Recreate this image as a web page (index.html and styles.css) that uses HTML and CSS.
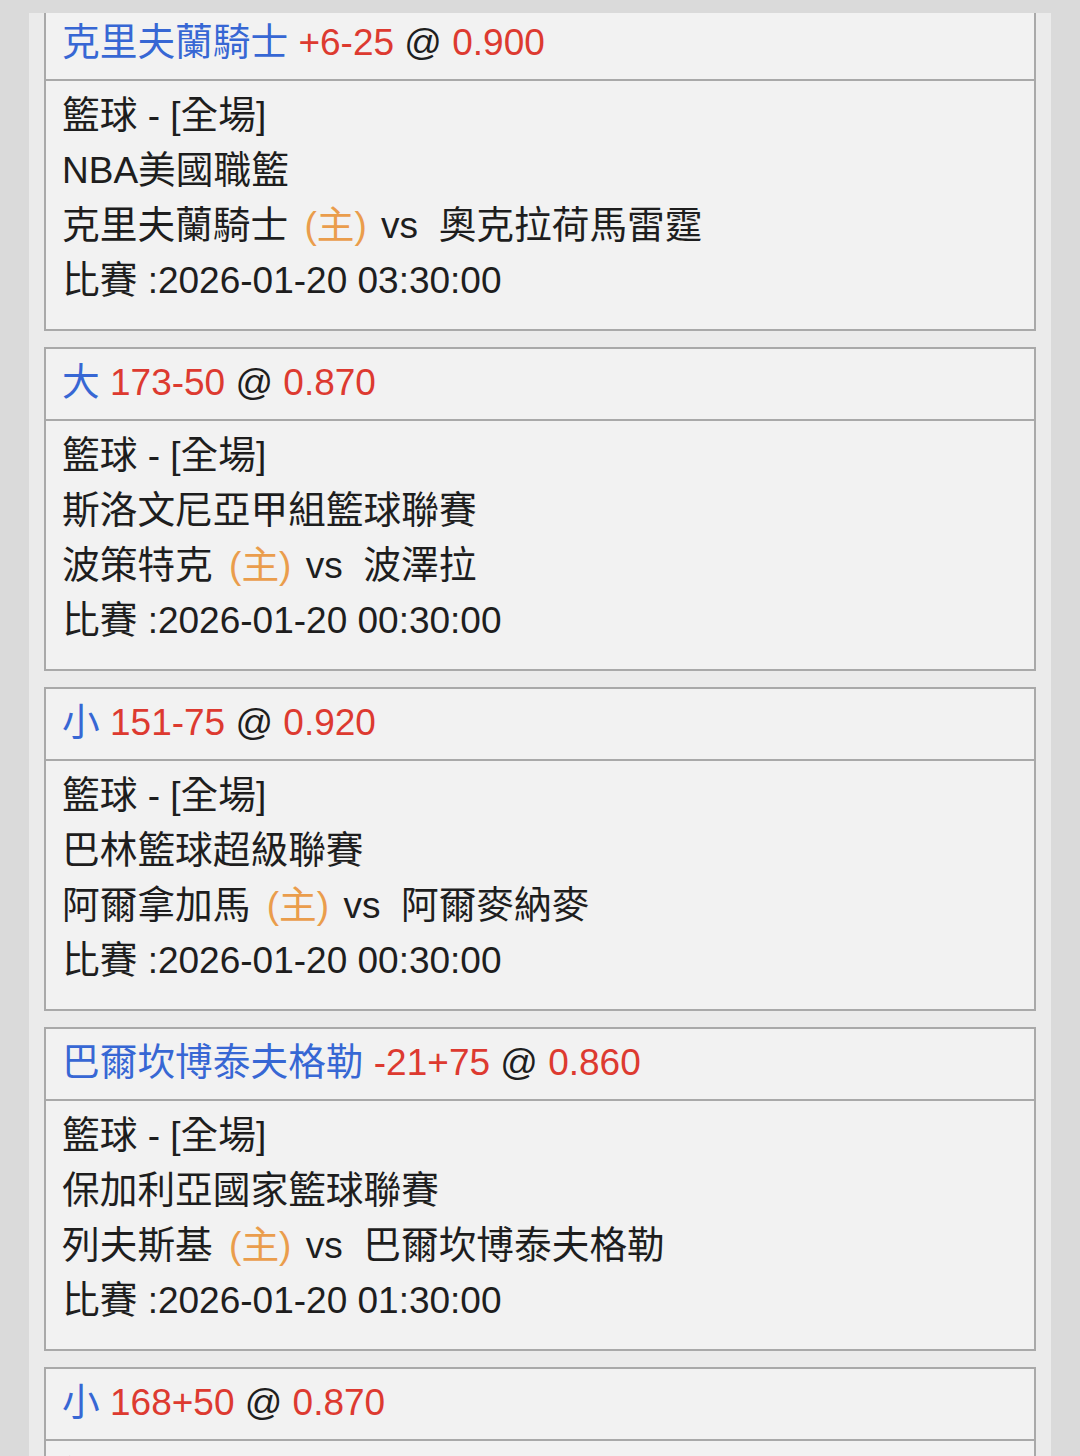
FILE: index.html
```html
<!DOCTYPE html>
<html lang="zh-Hant">
<head>
<meta charset="utf-8">
<link rel="stylesheet" href="styles.css">
</head>
<body>
<div class="page">
  <div class="list">
    <div class="card first">
      <div class="head"><span class="blue c">克里夫蘭騎士</span> <span class="red">+6-25</span> @ <span class="red">0.900</span></div>
      <div class="body">
        <div><span class="c">籃球</span> - [<span class="c">全場</span>]</div>
        <div>NBA<span class="c">美國職籃</span></div>
        <div><span class="c">克里夫蘭騎士</span> <span class="orange">(<span class="c">主</span>)</span> <span class="vs">vs</span> &nbsp;<span class="c">奧克拉荷馬雷霆</span></div>
        <div><span class="c">比賽</span> :2026-01-20 03:30:00</div>
      </div>
    </div>
    <div class="card">
      <div class="head"><span class="blue c">大</span> <span class="red">173-50</span> @ <span class="red">0.870</span></div>
      <div class="body">
        <div><span class="c">籃球</span> - [<span class="c">全場</span>]</div>
        <div><span class="c">斯洛文尼亞甲組籃球聯賽</span></div>
        <div><span class="c">波策特克</span> <span class="orange">(<span class="c">主</span>)</span> <span class="vs">vs</span> &nbsp;<span class="c">波澤拉</span></div>
        <div><span class="c">比賽</span> :2026-01-20 00:30:00</div>
      </div>
    </div>
    <div class="card">
      <div class="head"><span class="blue c">小</span> <span class="red">151-75</span> @ <span class="red">0.920</span></div>
      <div class="body">
        <div><span class="c">籃球</span> - [<span class="c">全場</span>]</div>
        <div><span class="c">巴林籃球超級聯賽</span></div>
        <div><span class="c">阿爾拿加馬</span> <span class="orange">(<span class="c">主</span>)</span> <span class="vs">vs</span> &nbsp;<span class="c">阿爾麥納麥</span></div>
        <div><span class="c">比賽</span> :2026-01-20 00:30:00</div>
      </div>
    </div>
    <div class="card">
      <div class="head"><span class="blue c">巴爾坎博泰夫格勒</span> <span class="red">-21+75</span> @ <span class="red">0.860</span></div>
      <div class="body">
        <div><span class="c">籃球</span> - [<span class="c">全場</span>]</div>
        <div><span class="c">保加利亞國家籃球聯賽</span></div>
        <div><span class="c">列夫斯基</span> <span class="orange">(<span class="c">主</span>)</span> <span class="vs">vs</span> &nbsp;<span class="c">巴爾坎博泰夫格勒</span></div>
        <div><span class="c">比賽</span> :2026-01-20 01:30:00</div>
      </div>
    </div>
    <div class="card">
      <div class="head"><span class="blue c">小</span> <span class="red">168+50</span> @ <span class="red">0.870</span></div>
      <div class="body">
        <div><span class="c">籃球</span> - [<span class="c">全場</span>]</div>
        <div>&nbsp;</div>
        <div>&nbsp;</div>
        <div>&nbsp;</div>
      </div>
    </div>
  </div>
</div>
</body>
</html>
```

FILE: styles.css
```css
html, body {
  margin: 0;
  padding: 0;
  background: #dadada;
}
.page {
  height: 1456px;
  overflow: hidden;
  padding: 13px 29px 0 29px;
  box-sizing: border-box;
}
.list {
  background: #ebebeb;
  height: 1443px;
  overflow: hidden;
  padding: 0 15px;
  display: flex;
  flex-direction: column;
  gap: 16px;
  font-family: "Liberation Sans", "Noto Sans CJK TC", sans-serif;
  font-size: 37px;
  color: #1e1e1e;
}
.c {
  font-family: "Noto Sans CJK TC", sans-serif;
  font-size: 37.7px;
}
.card {
  flex: none;
  border: 2px solid #a9a9a9;
  background: #f2f2f2;
}
.card.first {
  margin-top: -6px;
}
.head {
  padding: 2px 16px 13px;
  height: 55px;
  line-height: 55px;
  border-bottom: 2px solid #a9a9a9;
  white-space: nowrap;
}
.body {
  padding: 3px 16px 25px;
  white-space: nowrap;
}
.body > div {
  height: 55px;
  line-height: 55px;
}
.blue { color: #3767d4; }
.red { color: #dd3a30; }
.orange { color: #ea9d4c; margin-left: 6px; }
.vs { margin-left: 4px; }
```
